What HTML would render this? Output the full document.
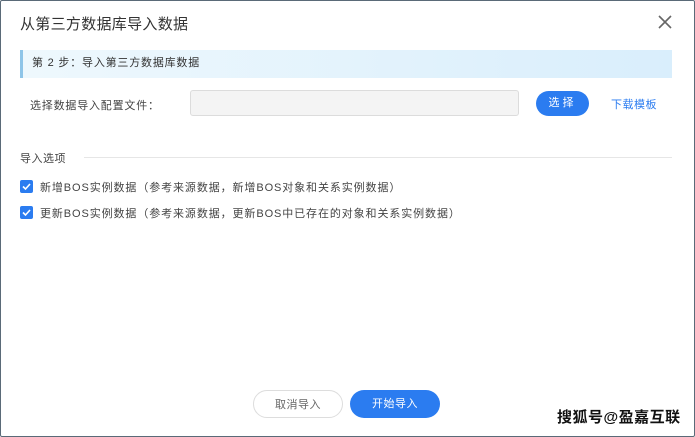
<!DOCTYPE html>
<html><head><meta charset="utf-8"><style>
*{margin:0;padding:0;box-sizing:border-box}
body{width:695px;height:437px;overflow:hidden;background:#fff;font-family:"Liberation Sans","Noto Sans CJK SC",sans-serif;position:relative;color:#333}
.frame{position:absolute;left:0;top:0;width:695px;height:437px;border:1px solid #5a6a78;border-radius:2px}
.title{position:absolute;left:20px;top:13px;font-size:15px;color:#333;letter-spacing:.3px}
.close{position:absolute;left:657px;top:14px}
.step{position:absolute;left:20px;top:50px;width:652px;height:28px;background:linear-gradient(90deg,#eef8fd,#d9eefc);border-left:3px solid #8fc5e8;font-size:11px;line-height:27px;padding-left:9px;color:#333;letter-spacing:.8px}
.lbl{position:absolute;left:30px;top:97px;font-size:11px;color:#444;letter-spacing:.8px}
.inp{position:absolute;left:190px;top:90px;width:329px;height:26px;background:#f4f4f4;border:1px solid #dcdcdc;border-radius:3px}
.sel{position:absolute;left:536px;top:91px;width:53px;height:25px;background:#2b7cf0;border-radius:13px;color:#fff;font-size:11px;line-height:25px;text-align:center;letter-spacing:3px}
.dl{position:absolute;left:611px;top:96px;font-size:11px;color:#2b7cf0;letter-spacing:.5px}
.sec{position:absolute;left:20px;top:150px;font-size:11px;color:#444;letter-spacing:.5px}
.hr{position:absolute;left:84px;top:157px;width:588px;height:1px;background:#e6e6e6}
.cb{position:absolute;left:20px;width:13px;height:13px;background:#2b7cf0;border-radius:2px}
.ct{position:absolute;left:40px;font-size:11px;color:#444;letter-spacing:.9px}
.btn{position:absolute;top:390px;height:28px;border-radius:14px;font-size:11px;line-height:28px;text-align:center;letter-spacing:.5px}
.wm{position:absolute;left:557px;top:406px;font-size:15px;color:#111;font-weight:bold;letter-spacing:.5px}
</style></head><body>
<div class="frame"></div>
<div class="title">从第三方数据库导入数据</div>
<svg class="close" width="16" height="16" viewBox="0 0 16 16"><path d="M2 2L14 14M14 2L2 14" stroke="#666" stroke-width="1.6"/></svg>
<div class="step">第 2 步：导入第三方数据库数据</div>
<div class="lbl">选择数据导入配置文件：</div>
<div class="inp"></div>
<div class="sel">选择</div>
<div class="dl">下载模板</div>
<div class="sec">导入选项</div>
<div class="hr"></div>
<div class="cb" style="top:180px"><svg width="13" height="13" viewBox="0 0 13 13"><path d="M3 6.5L5.5 9L10 4" stroke="#fff" stroke-width="1.6" fill="none"/></svg></div>
<div class="ct" style="top:179px">新增BOS实例数据（参考来源数据，新增BOS对象和关系实例数据）</div>
<div class="cb" style="top:206px"><svg width="13" height="13" viewBox="0 0 13 13"><path d="M3 6.5L5.5 9L10 4" stroke="#fff" stroke-width="1.6" fill="none"/></svg></div>
<div class="ct" style="top:205px">更新BOS实例数据（参考来源数据，更新BOS中已存在的对象和关系实例数据）</div>
<div class="btn" style="left:253px;width:90px;border:1px solid #ddd;color:#666;background:#fff">取消导入</div>
<div class="btn" style="left:350px;width:90px;background:#2b7cf0;color:#fff">开始导入</div>
<div class="wm">搜狐号@盈嘉互联</div>
</body></html>
